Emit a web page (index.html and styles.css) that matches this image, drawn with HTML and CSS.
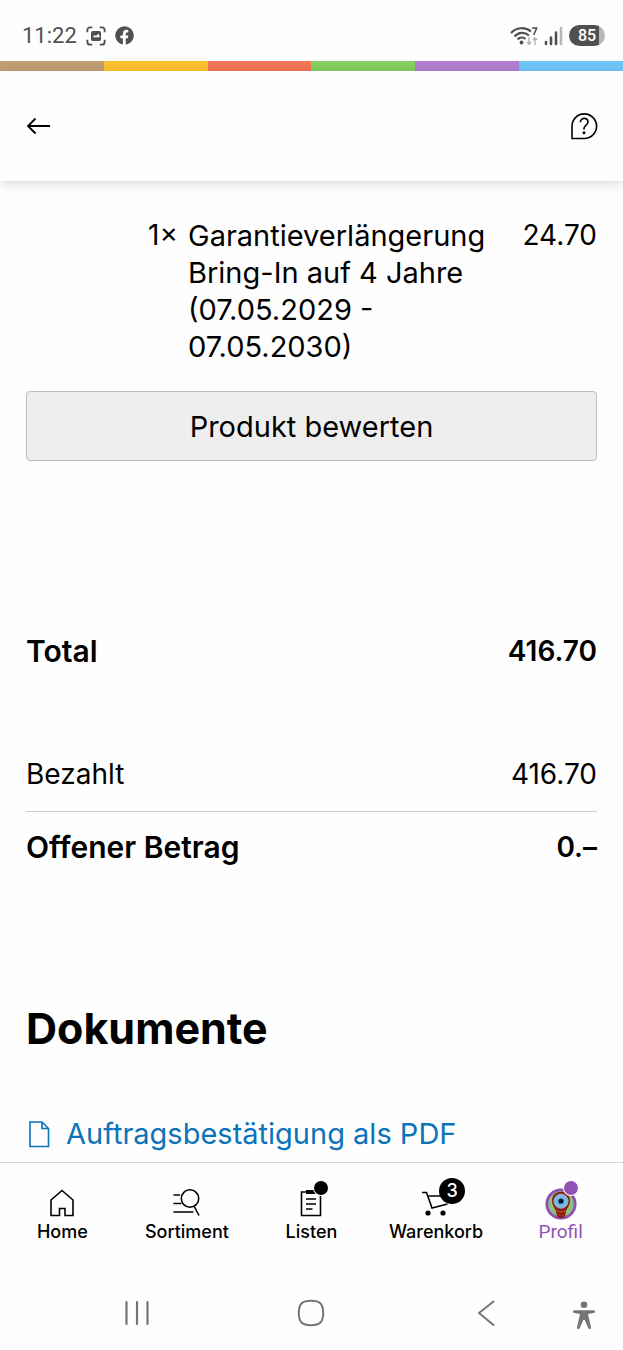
FILE: index.html
```html
<!DOCTYPE html>
<html lang="de">

<head>
    <meta charset="UTF-8">
    <meta name="viewport" content="width=device-width, initial-scale=1.0">
    <title>Bestellung</title>
    <link rel="stylesheet" href="styles.css">
</head>

<body>
    <div class="status">
        <span class="time">11:22</span>
        <svg class="shot" width="20" height="20" viewBox="0 0 22 22" fill="none" stroke="#505050" stroke-width="2">
            <path d="M1.500 7V4.500a3 3 0 0 1 3-3H7M15 1.500h2.500a3 3 0 0 1 3 3V7M20.500 15v2.500a3 3 0 0 1-3 3H15M7 20.500H4.500a3 3 0 0 1-3-3V15" />
            <rect x="5.500" y="5.500" width="11" height="11" rx="2" fill="#505050" stroke="none" />
            <path d="M7.500 12.500l2-2.500 1.500 1 2.500-2.500 1.500 2.500v1.500z" fill="#fff" stroke="none" />
        </svg>
        <svg width="19" height="19" viewBox="0 0 20 20">
            <circle cx="10" cy="10" r="9.800" fill="#505050" />
            <path d="M8.300 20v-7H5.700v-3h2.600V8c0-2.700 1.500-4 3.800-4 1 0 1.900.2 1.900.2v2.600h-1.200c-1.100 0-1.500.7-1.500 1.500V10h2.700l-.4 3h-2.300v7z" fill="#fff" />
        </svg>
        <div class="signals">
            <svg width="28" height="22" viewBox="0 0 28 22" fill="none" stroke="#505050" stroke-width="2.200">
                <path d="M1 8a14.500 14.500 0 0 1 20-1.500M4.500 11.500a10 10 0 0 1 14.500-1M7.500 14.500a6 6 0 0 1 8-.5" />
                <circle cx="11.500" cy="17.500" r="1.900" fill="#505050" stroke="none" />
                <path d="M22 3h4.700l-3 7" stroke-width="1.600" />
                <path d="M19 12v7M17 17l2 2.300 2-2.300M25 20v-7M23 15l2-2.300 2 2.300" stroke="#b0b0b0" stroke-width="1.400" />
            </svg>
            <svg width="19" height="20" viewBox="0 0 19 20" stroke="#505050" stroke-width="2.600" stroke-linecap="round">
                <path d="M2 16v2M7 11.500V18M12 6.500V18" />
                <path d="M17 2v16" stroke="#b8b8b8" />
            </svg>
            <span class="battery">85</span>
        </div>
    </div>
    <div class="stripes">
        <i class="tan"></i><i class="yellow"></i><i class="red"></i><i class="green"></i><i class="purple"></i><i class="blue"></i>
    </div>

    <header class="header">
        <button class="icon-btn" type="button" aria-label="Zurück">
            <svg width="26" height="18" viewBox="0 0 26 18" fill="none" stroke="#000" stroke-width="1.800">
                <path d="M25 9H3M10.500 1.500L3 9l7.500 7.500" />
            </svg>
        </button>
        <button class="icon-btn" type="button" aria-label="Hilfe">
            <svg width="28" height="28" viewBox="0 0 28 28" fill="none" stroke="#000" stroke-width="1.600">
                <path d="M2 26.500V14A12.300 12.300 0 1 1 14.300 26.500z" />
                <path d="M10.400 10.300c0-2.400 1.600-3.900 3.800-3.900s3.800 1.500 3.800 3.700c0 3-4 3.100-4 6.400v1" />
                <circle cx="14" cy="20.800" r="1.500" fill="#000" stroke="none" />
            </svg>
        </button>
    </header>

    <main>
        <div class="item">
            <span class="amount">1×</span>
            <p class="name">Garantieverlängerung Bring-In auf 4 Jahre (07.05.2029 - 07.05.2030)</p>
            <span class="price">24.70</span>
        </div>
        <button class="rate" type="button">Produkt bewerten</button>

        <div class="row total"><span class="label">Total</span><span>416.70</span></div>
        <div class="row paid"><span class="label">Bezahlt</span><span>416.70</span></div>
        <div class="row open"><span class="label">Offener Betrag</span><span>0.–</span></div>

        <h2>Dokumente</h2>
        <a class="doc" href="#">
            <svg width="26" height="28" viewBox="0 0 26 28" fill="none" stroke="#0b73b9" stroke-width="1.600">
                <path d="M4 2h12l6.500 6.500V26.500H4zM16 2v6.500h6.500" />
            </svg>
            Auftragsbestätigung als PDF
        </a>
    </main>

    <nav class="tabs">
        <a class="tab" href="#">
            <svg width="30" height="30" viewBox="0 0 30 30" fill="none" stroke="#000" stroke-width="1.600">
                <path d="M4 12L15 2.500 26 12V27.500H18V20.500H12.500V27.500H4z" />
            </svg>
            Home
        </a>
        <a class="tab" href="#">
            <svg width="30" height="30" viewBox="0 0 30 30" fill="none" stroke="#000" stroke-width="1.600">
                <circle cx="18" cy="10.500" r="8.700" />
                <path d="M1.500 7h6.500M1.500 15.500h8M1.500 24h20M22 18l5 9.500" />
            </svg>
            Sortiment
        </a>
        <a class="tab" href="#">
            <span class="icon">
                <svg width="30" height="30" viewBox="0 0 30 30" fill="none" stroke="#000" stroke-width="1.600">
                    <path d="M5.500 4h19v23.500h-19zM10 11h10M10 16h10M10 21h6.500" />
                    <path d="M10 2h10v4H10z" fill="#000" stroke="none" />
                </svg>
                <span class="dot"></span>
            </span>
            Listen
        </a>
        <a class="tab" href="#">
            <span class="icon">
                <svg width="30" height="30" viewBox="0 0 30 30" fill="none" stroke="#000" stroke-width="1.600">
                    <path d="M1 4.500h4.500L11 20l15.500-4M7 8h20" />
                    <circle cx="7" cy="25" r="2.600" fill="#000" stroke="none" />
                    <circle cx="22" cy="25" r="2.600" fill="#000" stroke="none" />
                </svg>
                <span class="badge">3</span>
            </span>
            Warenkorb
        </a>
        <a class="tab active" href="#">
            <span class="icon">
                <svg width="34" height="32" viewBox="0 0 34 34">
                    <circle cx="17" cy="17" r="16.500" fill="#8f50b4" />
                    <circle cx="17" cy="17" r="13.500" fill="#8fc17c" />
                    <path d="M17 4c-6 0-9.500 4-9.500 9.500 0 6 4.500 9 4.500 13 0 3 2 5.500 5 5.500s5-2.500 5-5.500c0-4 4.500-7 4.500-13C26.500 8 23 4 17 4z" fill="#861f14" />
                    <path d="M12 23q5 4 10 0l-2.500 6h-5z" fill="#e5432b" />
                    <circle cx="17" cy="14" r="7.500" fill="#78bce8" stroke="#a9a5ae" />
                    <circle cx="17" cy="14" r="3.200" fill="#315f8a" />
                    <circle cx="17" cy="14" r="2.200" fill="#07162a" />
                    <path d="M14 26q3 3 6 0" fill="none" stroke="#40130f" stroke-width="1.500" />
                </svg>
                <span class="dot"></span>
            </span>
            Profil
        </a>
    </nav>

    <div class="system">
        <button class="icon-btn recent" type="button" aria-label="Letzte Apps">
            <svg width="26" height="28" viewBox="0 0 26 28" stroke="#757575" stroke-width="2.200" stroke-linecap="round">
                <path d="M2.500 3v22M13 3v22M23.500 3v22" />
            </svg>
        </button>
        <button class="icon-btn" type="button" aria-label="Startbildschirm">
            <svg width="28" height="28" viewBox="0 0 28 28" fill="none" stroke="#757575" stroke-width="2">
                <path d="M14 1.800c9 0 12.200 3.200 12.200 12.200S23 26.200 14 26.200 1.800 23 1.800 14 5 1.800 14 1.800z" />
            </svg>
        </button>
        <button class="icon-btn" type="button" aria-label="Zurück">
            <svg width="18" height="28" viewBox="0 0 18 28" fill="none" stroke="#757575" stroke-width="2" stroke-linecap="round" stroke-linejoin="round">
                <path d="M16.500 2.500L2 14l14.500 12" />
            </svg>
        </button>
        <button class="icon-btn access" type="button" aria-label="Bedienungshilfen">
            <svg width="22" height="32" viewBox="0 -4 22 32" fill="#757575">
                <circle cx="11" cy="3.800" r="3.300" />
                <path d="M1.300 9.300h19.400a1.300 1.300 0 0 1 0 2.600L15 13l3 13.200a1.400 1.400 0 0 1-2.700.8L11.700 19h-1.400L6.700 27a1.400 1.400 0 0 1-2.700-.8L7 13l-5.700-1.100a1.300 1.300 0 0 1 0-2.600z" />
            </svg>
        </button>
    </div>
</body>

</html>
```
FILE: styles.css
```css
* {
    box-sizing: border-box;
}

body {
    margin: 0;
    min-height: 100vh;
    display: flex;
    flex-direction: column;
    background-color: #fefefe;
    color: #000;
    font-family: Inter, "Liberation Sans", sans-serif;
    font-size: 28px;
    line-height: 37px;
}

svg {
    display: block;
}

a {
    color: inherit;
    text-decoration: none;
}

.icon-btn {
    padding: 0;
    border: 0;
    background: none;
}

/* status bar */
.status {
    height: 61px;
    padding: 10px 18px 0 22px;
    display: flex;
    align-items: center;
    gap: 9px;
    color: #505050;
    font-family: Roboto, sans-serif;
}

.time {
    font-size: 22px;
}

.signals {
    margin-left: auto;
    display: flex;
    align-items: center;
    gap: 6px;
}

.battery {
    width: 36px;
    height: 21px;
    border-radius: 11px;
    background-image: linear-gradient(90deg, #505050 84%, #b8b8b8 84%);
    color: #fff;
    font-size: 16px;
    font-weight: 500;
    line-height: 21px;
    text-align: center;
}

.stripes {
    height: 10px;
    display: flex;
}

.stripes i {
    flex: 1;
}

.tan { background-color: #c2a077; }
.yellow { background-color: #ffc22e; }
.red { background-color: #f57758; }
.green { background-color: #86d161; }
.purple { background-color: #b07fd0; }
.blue { background-color: #70c6f8; }

.header {
    height: 110px;
    padding: 0 25px;
    display: flex;
    justify-content: space-between;
    align-items: center;
    box-shadow: 0 2px 12px rgba(0, 0, 0, 0.16);
}

/* order */
main {
    flex: 1;
    padding: 36px 26px 9px;
}

.item {
    display: flex;
    padding-left: 122px;
}

.amount {
    width: 40px;
}

.name {
    flex: 1;
    margin: 0;
    padding-right: 24px;
    font-size: 29px;
}

.rate {
    width: 100%;
    height: 70px;
    margin: 26px 0 172px;
    border: 1px solid #bfbfbf;
    border-radius: 4px;
    background-color: #eee;
    color: #000;
    font: inherit;
    font-size: 29px;
}

.row {
    display: flex;
    justify-content: space-between;
}

.total,
.open {
    font-weight: 600;
}

.total .label,
.open .label {
    font-size: 30px;
}

.paid {
    margin-top: 86px;
    padding-bottom: 18px;
    border-bottom: 1px solid #ccc;
}

.open {
    padding-top: 17px;
}

h2 {
    margin: 134px 0 59px;
    font-size: 43px;
    font-weight: 700;
    line-height: 56px;
}

.doc {
    display: flex;
    align-items: center;
    gap: 14px;
    color: #0b73b9;
    font-size: 29px;
}

/* bottom tabs */
.tabs {
    height: 114px;
    padding-top: 25px;
    border-top: 1px solid #d4d4d4;
    display: flex;
    align-items: flex-start;
}

.tab {
    flex: 1;
    display: flex;
    flex-direction: column;
    align-items: center;
    font-size: 18px;
    font-weight: 500;
    line-height: 28px;
}

.active {
    color: #9353b5;
    font-family: Roboto, sans-serif;
    font-size: 19px;
    font-weight: 400;
}

.icon {
    position: relative;
    height: 30px;
}

.dot {
    position: absolute;
    top: -7px;
    right: -2px;
    width: 14px;
    height: 14px;
    border-radius: 50%;
    background-color: #000;
    box-shadow: 0 0 0 1px #fff;
}

.active .dot {
    right: 0;
    background-color: #9353b5;
}

.badge {
    position: absolute;
    top: -10px;
    right: -14px;
    width: 26px;
    height: 26px;
    border-radius: 50%;
    background-color: #000;
    color: #fff;
    font-size: 18px;
    line-height: 26px;
    text-align: center;
}

/* android buttons */
.system {
    height: 74px;
    display: grid;
    grid-template-columns: 8% 28% 28% 28% 8%;
    align-items: center;
    justify-items: center;
}

.recent {
    grid-column: 2;
}

.access {
    justify-self: start;
}
```
